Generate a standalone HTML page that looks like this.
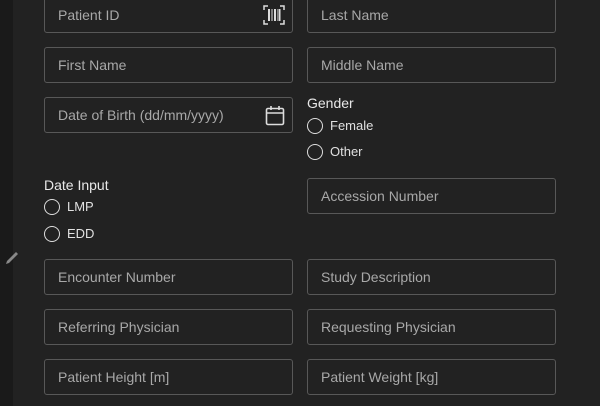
<!DOCTYPE html><html><head><style>
body{margin:0;width:600px;height:406px;background:#222;overflow:hidden;font-family:"Liberation Sans",sans-serif;position:relative}
.strip{position:absolute;left:0;top:0;width:13px;height:406px;background:#1a1a1a}
.in{position:absolute;border:1px solid #585858;border-radius:3px;color:#a8a8a8;font-size:14px;line-height:34px;padding-left:13px;box-sizing:border-box;width:249px;height:36px}
.l{left:44px}.r{left:307px}
.lab{position:absolute;color:#e8e8e8;font-size:14px}
.rad{position:absolute;color:#e0e0e0;font-size:13px;line-height:17px}
.rad:before{content:"";display:inline-block;width:14px;height:14px;border:1.7px solid #ddd;border-radius:50%;vertical-align:-4px;margin-right:7px}
</style></head><body>
<div class="strip"></div>
<svg style="position:absolute;left:4px;top:249px" width="18" height="18" viewBox="0 0 18 18"><path d="M2 15 L3 12 L12 3 L14 5 L5 14 Z" fill="#888"/></svg>
<div class="in l" style="top:-3px">Patient ID
<svg style="position:absolute;right:7px;top:7px" width="22" height="20" viewBox="0 0 22 20"><g stroke="#ddd" fill="none" stroke-width="1.5"><path d="M1 5V1H5M17 1H21V5M1 15V19H5M17 19H21V15"/></g><g fill="#ddd"><rect x="5" y="4" width="2" height="12"/><rect x="8.5" y="4" width="1" height="12"/><rect x="11" y="4" width="2" height="12"/><rect x="14.5" y="4" width="1" height="12"/><rect x="16" y="4" width="1.5" height="12"/></g></svg></div>
<div class="in r" style="top:-3px">Last Name</div>
<div class="in l" style="top:47px">First Name</div>
<div class="in r" style="top:47px">Middle Name</div>
<div class="in l" style="top:97px">Date of Birth (dd/mm/yyyy)
<svg style="position:absolute;right:7px;top:7px" width="20" height="22" viewBox="0 0 20 22"><g stroke="#ddd" fill="none" stroke-width="1.6"><rect x="1.5" y="3.5" width="17" height="16" rx="1.5"/><path d="M1.5 8H18.5M6 1V5M14 1V5"/></g></svg></div>
<div class="lab" style="left:307px;top:95px">Gender</div>
<div class="rad" style="left:307px;top:117px">Female</div>
<div class="rad" style="left:307px;top:143px">Other</div>
<div class="lab" style="left:44px;top:177px">Date Input</div>
<div class="rad" style="left:44px;top:198px">LMP</div>
<div class="rad" style="left:44px;top:225px">EDD</div>
<div class="in r" style="top:178px">Accession Number</div>
<div class="in l" style="top:259px">Encounter Number</div>
<div class="in r" style="top:259px">Study Description</div>
<div class="in l" style="top:309px">Referring Physician</div>
<div class="in r" style="top:309px">Requesting Physician</div>
<div class="in l" style="top:359px">Patient Height [m]</div>
<div class="in r" style="top:359px">Patient Weight [kg]</div>
</body></html>
